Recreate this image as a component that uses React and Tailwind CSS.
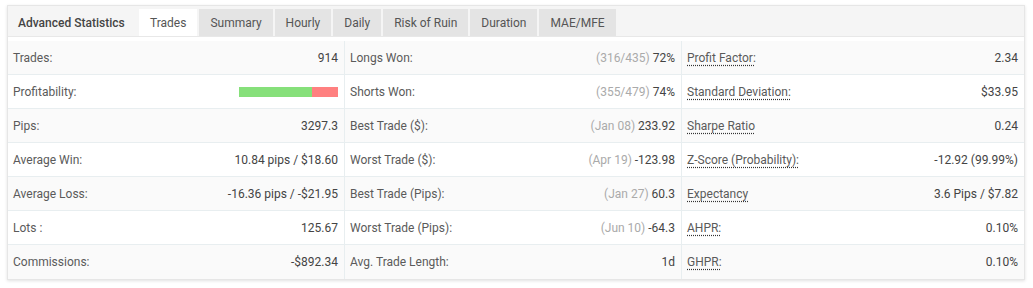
const tabs = ["Trades", "Summary", "Hourly", "Daily", "Risk of Ruin", "Duration", "MAE/MFE"];

const col1 = [
  ["Trades:", "914"],
  ["Profitability:", "bar"],
  ["Pips:", "3297.3"],
  ["Average Win:", "10.84 pips / $18.60"],
  ["Average Loss:", "-16.36 pips / -$21.95"],
  ["Lots :", "125.67"],
  ["Commissions:", "-$892.34"],
];

const col2 = [
  ["Longs Won:", "(316/435)", "72%"],
  ["Shorts Won:", "(355/479)", "74%"],
  ["Best Trade ($):", "(Jan 08)", "233.92"],
  ["Worst Trade ($):", "(Apr 19)", "-123.98"],
  ["Best Trade (Pips):", "(Jan 27)", "60.3"],
  ["Worst Trade (Pips):", "(Jun 10)", "-64.3"],
  ["Avg. Trade Length:", "", "1d"],
];

const col3 = [
  ["Profit Factor:", "2.34"],
  ["Standard Deviation:", "$33.95"],
  ["Sharpe Ratio", "0.24"],
  ["Z-Score (Probability):", "-12.92 (99.99%)"],
  ["Expectancy", "3.6 Pips / $7.82"],
  ["AHPR:", "0.10%"],
  ["GHPR:", "0.10%"],
];

function rowClass(i) {
  return `h-[34px] flex items-center justify-between pl-[5px] pr-[6px] ${i % 2 === 0 ? "bg-[#fafafa]" : "bg-white"} ${i < 6 ? "border-b border-[#e8eef0]" : ""}`;
}

export default function App() {
  return (
    <div className="bg-white pt-[5px] pl-[7px] w-[1033px] h-[288px] text-[12px] text-[#5a5a5a]" style={{ fontFamily: "Roboto, 'Liberation Sans', sans-serif" }}>
      <div className="w-[1018px] border border-[#e6e6e6] shadow-[0_1px_3px_rgba(0,0,0,0.12)]">
        {/* Tab bar */}
        <div className="flex items-end h-[31px] bg-[#f5f5f5] border-b border-[#e8e8e8]">
          <div className="pl-[10px] h-[27px] flex items-center font-medium text-[#444] w-[131px] whitespace-nowrap">
            Advanced Statistics
          </div>
          <div className="flex gap-[2px]">
            {tabs.map((t, i) => (
              <div
                key={t}
                className={
                  i === 0
                    ? "h-[27px] flex items-center px-[11px] bg-white text-[#555] -mb-px"
                    : "h-[27px] flex items-center px-[11px] bg-[#e4e4e4] text-[#555]"
                }
              >
                {t}
              </div>
            ))}
          </div>
        </div>

        {/* Body */}
        <div className="grid grid-cols-[337px_337px_1fr] pt-[4px]">
          <div className="border-r border-[#e8eef0]">
            {col1.map(([l, v], i) => (
              <div key={l} className={rowClass(i)}>
                <span>{l}</span>
                {v === "bar" ? (
                  <div className="flex w-[99px] h-[10px]">
                    <div className="w-[73px] bg-[#86e07a]"></div>
                    <div className="flex-1 bg-[#ff8080]"></div>
                  </div>
                ) : (
                  <span className="text-[#444]">{v}</span>
                )}
              </div>
            ))}
          </div>
          <div className="border-r border-[#e8eef0]">
            {col2.map(([l, g, v], i) => (
              <div key={l} className={rowClass(i)}>
                <span>{l}</span>
                <span className="text-[#444]">
                  {g && <span className="text-[#aaa]">{g} </span>}
                  {v}
                </span>
              </div>
            ))}
          </div>
          <div>
            {col3.map(([l, v], i) => (
              <div key={l} className={rowClass(i)}>
                <span className="underline decoration-dotted decoration-[#333] underline-offset-[3px]">{l}</span>
                <span className="text-[#444]">{v}</span>
              </div>
            ))}
          </div>
        </div>
      </div>
    </div>
  );
}
